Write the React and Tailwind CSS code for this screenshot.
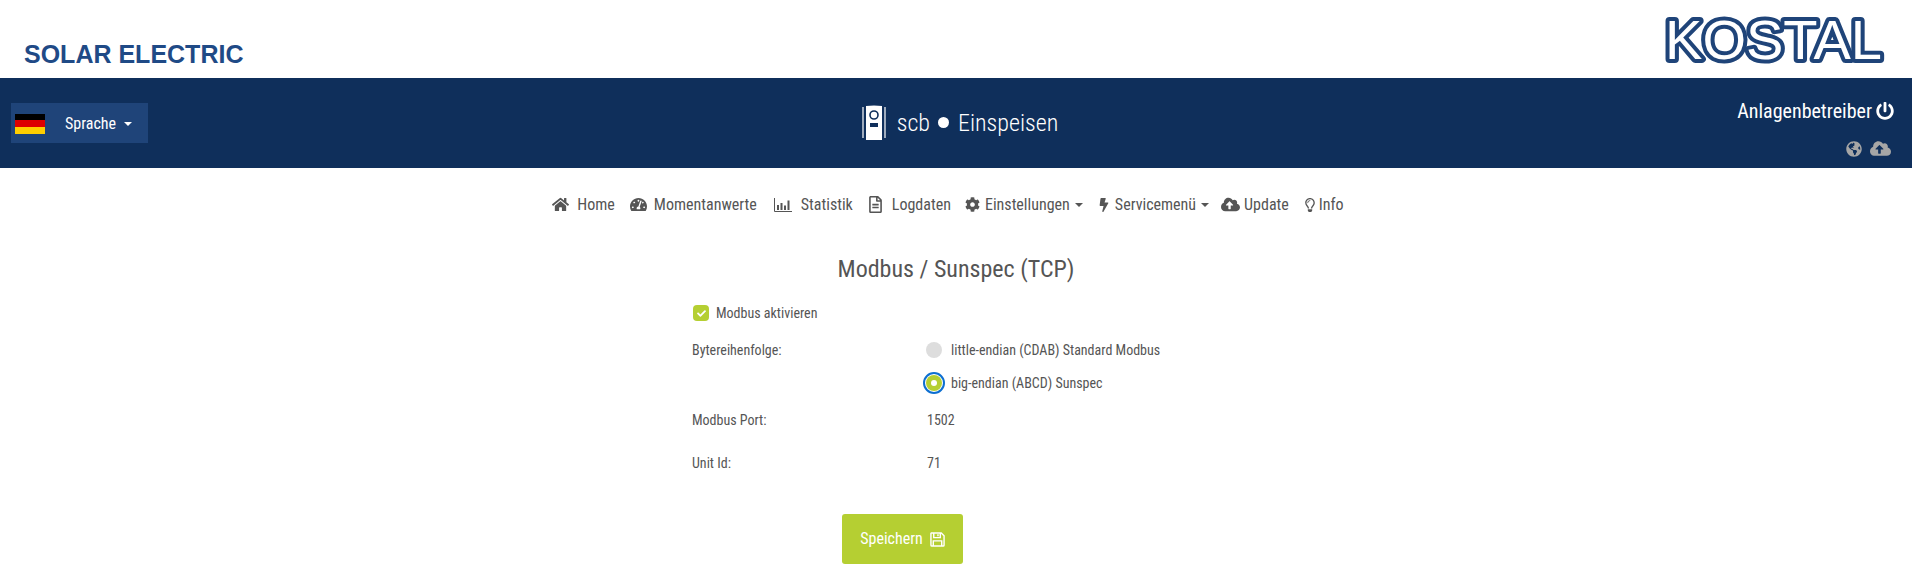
import React from 'react';
import {
  FaHome, FaTachometerAlt, FaRegFileAlt, FaCog, FaBolt, FaCloudUploadAlt, FaRegLightbulb,
  FaPowerOff, FaGlobeAmericas, FaCheck,
} from 'react-icons/fa';

const condensed = "font-['Roboto'] [font-stretch:75%]";

const Caret = () => (
  <span className="inline-block w-0 h-0 border-x-[4px] border-x-transparent border-t-[4px] border-t-current align-middle" />
);

const ChartIcon = ({ className }) => (
  <svg viewBox="0 0 18 14" width="18" height="14" className={className}>
    <path d="M0.5 0 V13.5 H18" fill="none" stroke="currentColor" />
    <path d="M3 7 H5 V12 H3 Z M6.5 5 H8.5 V12 H6.5 Z M10 7.5 H12 V12 H10 Z M13.5 2.5 H15.5 V12 H13.5 Z" fill="currentColor" />
  </svg>
);

const SaveIcon = () => (
  <svg viewBox="0 0 16 16" width="15" height="15" fill="none" stroke="currentColor" strokeWidth="1.5">
    <path d="M1.5 1 H12 L15 4 V14 Q15 15 14 15 H2 Q1 15 1 14 V1.5 Z" />
    <path d="M4 1 V6 H11 V1" />
    <path d="M8.5 2.5 V4.5" />
    <path d="M3.5 15 V9.5 H12.5 V15" />
  </svg>
);

const NavItem = ({ icon: Icon, label, caret, iconClass, className }) => (
  <a className={`flex items-center gap-[5px] text-[#555] text-[16px] whitespace-nowrap ${className || ''}`}>
    <Icon className={iconClass} />
    <span>{label}</span>
    {caret && <Caret />}
  </a>
);

const KostalLogo = () => (
  <svg width="228" height="68" viewBox="0 0 228 68" className="block">
    <text
      x="5"
      y="52"
      fontFamily="Liberation Sans, sans-serif"
      fontWeight="400"
      fontSize="55"
      textLength="217"
      lengthAdjust="spacingAndGlyphs"
      fill="#fff"
      stroke="#1f4479"
      strokeWidth="8"
      strokeLinejoin="round"
    >
      KOSTAL
    </text>
    <text
      x="5"
      y="52"
      fontFamily="Liberation Sans, sans-serif"
      fontWeight="400"
      fontSize="55"
      textLength="217"
      lengthAdjust="spacingAndGlyphs"
      fill="#fff"
      aria-hidden="true"
    >
      KOSTAL
    </text>
  </svg>
);

const ScbIcon = () => (
  <svg width="24" height="36" viewBox="0 0 24 36">
    <path d="M1 2 V33" stroke="#fff" strokeWidth="1.2" />
    <path d="M23 2 V33" stroke="#fff" strokeWidth="1.2" />
    <path d="M4 1 Q12 0 20 1 V35 H4 Z" fill="#fff" />
    <circle cx="12" cy="10" r="4" fill="none" stroke="#0f2f5b" strokeWidth="1.6" />
    <rect x="8" y="18" width="8" height="4" fill="#0f2f5b" />
  </svg>
);

const FormRow = ({ label, children, className }) => (
  <div className={`flex ${className}`}>
    <div className="w-[234px] shrink-0">{label}</div>
    <div>{children}</div>
  </div>
);

export default function App() {
  return (
    <div className={`${condensed} h-[570px] bg-white overflow-hidden text-[#555]`}>
      <header className="h-[78px] flex justify-between pl-[24px] pr-[24px] pt-[7px]">
        <div className="font-['Liberation_Sans'] [font-stretch:100%] font-bold text-[25px] text-[#1f4a86] pt-[34px] leading-[27px]">
          SOLAR ELECTRIC
        </div>
        <KostalLogo />
      </header>

      <div className="h-[90px] bg-[#0f2f5b] text-white flex justify-between relative">
        <div className="pl-[11px] pt-[25px]">
          <button className="h-[40px] w-[137px] bg-[#1f4479] flex items-center pl-[4px] text-[16px] pt-[1px]">
            <span className="flex flex-col w-[30px] h-[20px] shrink-0">
              <span className="flex-1 bg-black" />
              <span className="flex-1 bg-[#dd0000]" />
              <span className="flex-1 bg-[#ffce00]" />
            </span>
            <span className="ml-[20px]">Sprache</span>
            <span className="ml-[8px] flex"><Caret /></span>
          </button>
        </div>

        <div className="absolute left-0 right-0 top-[27px] flex justify-center">
          <div className="flex items-center text-[24px] font-light ml-[8px]">
            <ScbIcon />
            <span className="ml-[11px]">scb</span>
            <span className="w-[11px] h-[11px] bg-white rounded-full ml-[8px] mr-[9px] mb-[2px]" />
            <span>Einspeisen</span>
          </div>
        </div>

        <div className="pr-[18px] pt-[18px] flex flex-col items-end">
          <div className="flex items-center text-[20px] gap-[4px]">
            <span>Anlagenbetreiber</span>
            <FaPowerOff className="text-[18px]" />
          </div>
          <div className="flex items-center gap-[8px] text-[#a6a6a6] mt-[12px] mr-[3px]">
            <FaGlobeAmericas className="text-[16px]" />
            <FaCloudUploadAlt className="text-[21px]" />
          </div>
        </div>
      </div>

      <nav className="flex justify-center items-center gap-[15px] pt-[25px] pr-[16px] h-[48px]">
        <NavItem icon={FaHome} label="Home" iconClass="text-[17px] mr-[3px]" />
        <NavItem icon={FaTachometerAlt} label="Momentanwerte" iconClass="text-[17px] mr-[2px]" className="mr-[2px]" />
        <NavItem icon={ChartIcon} label="Statistik" iconClass="mr-[4px]" className="mr-[-1px]" />
        <NavItem icon={FaRegFileAlt} label="Logdaten" iconClass="text-[17px] mr-[3px]" className="mr-[-1px]" />
        <NavItem icon={FaCog} label="Einstellungen" caret iconClass="text-[15px]" className="mr-[-1px]" />
        <NavItem icon={FaBolt} label="Servicemenü" caret iconClass="text-[14px] mr-[-1px]" className="mr-[-3px]" />
        <NavItem icon={FaCloudUploadAlt} label="Update" iconClass="text-[19px] mr-[-1px]" className="mr-[-1px]" />
        <NavItem icon={FaRegLightbulb} label="Info" iconClass="text-[14px] mr-[-3px]" />
      </nav>

      <h1 className="text-center text-[24px] text-[#555] font-normal mt-[38px] leading-[30px]">
        Modbus / Sunspec (TCP)
      </h1>

      <div className="w-[400px] ml-[692px] mt-[19px] text-[14px] text-[#555]">
        <div className="flex items-center gap-[7px] h-[20px]">
          <span className="w-[16px] h-[16px] bg-[#b5cf32] rounded-[4px] flex items-center justify-center text-white ml-[1px]">
            <FaCheck className="text-[9px]" />
          </span>
          <span>Modbus aktivieren</span>
        </div>

        <FormRow label="Bytereihenfolge:" className="mt-[17px]">
          <div className="flex items-center gap-[9px] h-[20px] whitespace-nowrap">
            <span className="w-[16px] h-[16px] bg-[#dddddd] rounded-full" />
            <span>little-endian (CDAB) Standard Modbus</span>
          </div>
          <div className="flex items-center gap-[9px] h-[20px] mt-[13px] whitespace-nowrap">
            <span className="w-[16px] h-[16px] bg-[#b5cf32] rounded-full flex items-center justify-center outline-[2px] outline-[#0d6fd1] outline-offset-[1px]">
              <span className="w-[6px] h-[6px] bg-white rounded-full" />
            </span>
            <span>big-endian (ABCD) Sunspec</span>
          </div>
        </FormRow>

        <FormRow label="Modbus Port:" className="mt-[17px]"><span className="pl-[1px]">1502</span></FormRow>
        <FormRow label="Unit Id:" className="mt-[22px]"><span className="pl-[1px]">71</span></FormRow>
      </div>

      <div className="ml-[842px] mt-[40px]">
        <button className="w-[121px] h-[50px] bg-[#b5cf32] text-white rounded-[3px] text-[16px] flex items-center justify-center gap-[7px]">
          Speichern
          <SaveIcon />
        </button>
      </div>
    </div>
  );
}
